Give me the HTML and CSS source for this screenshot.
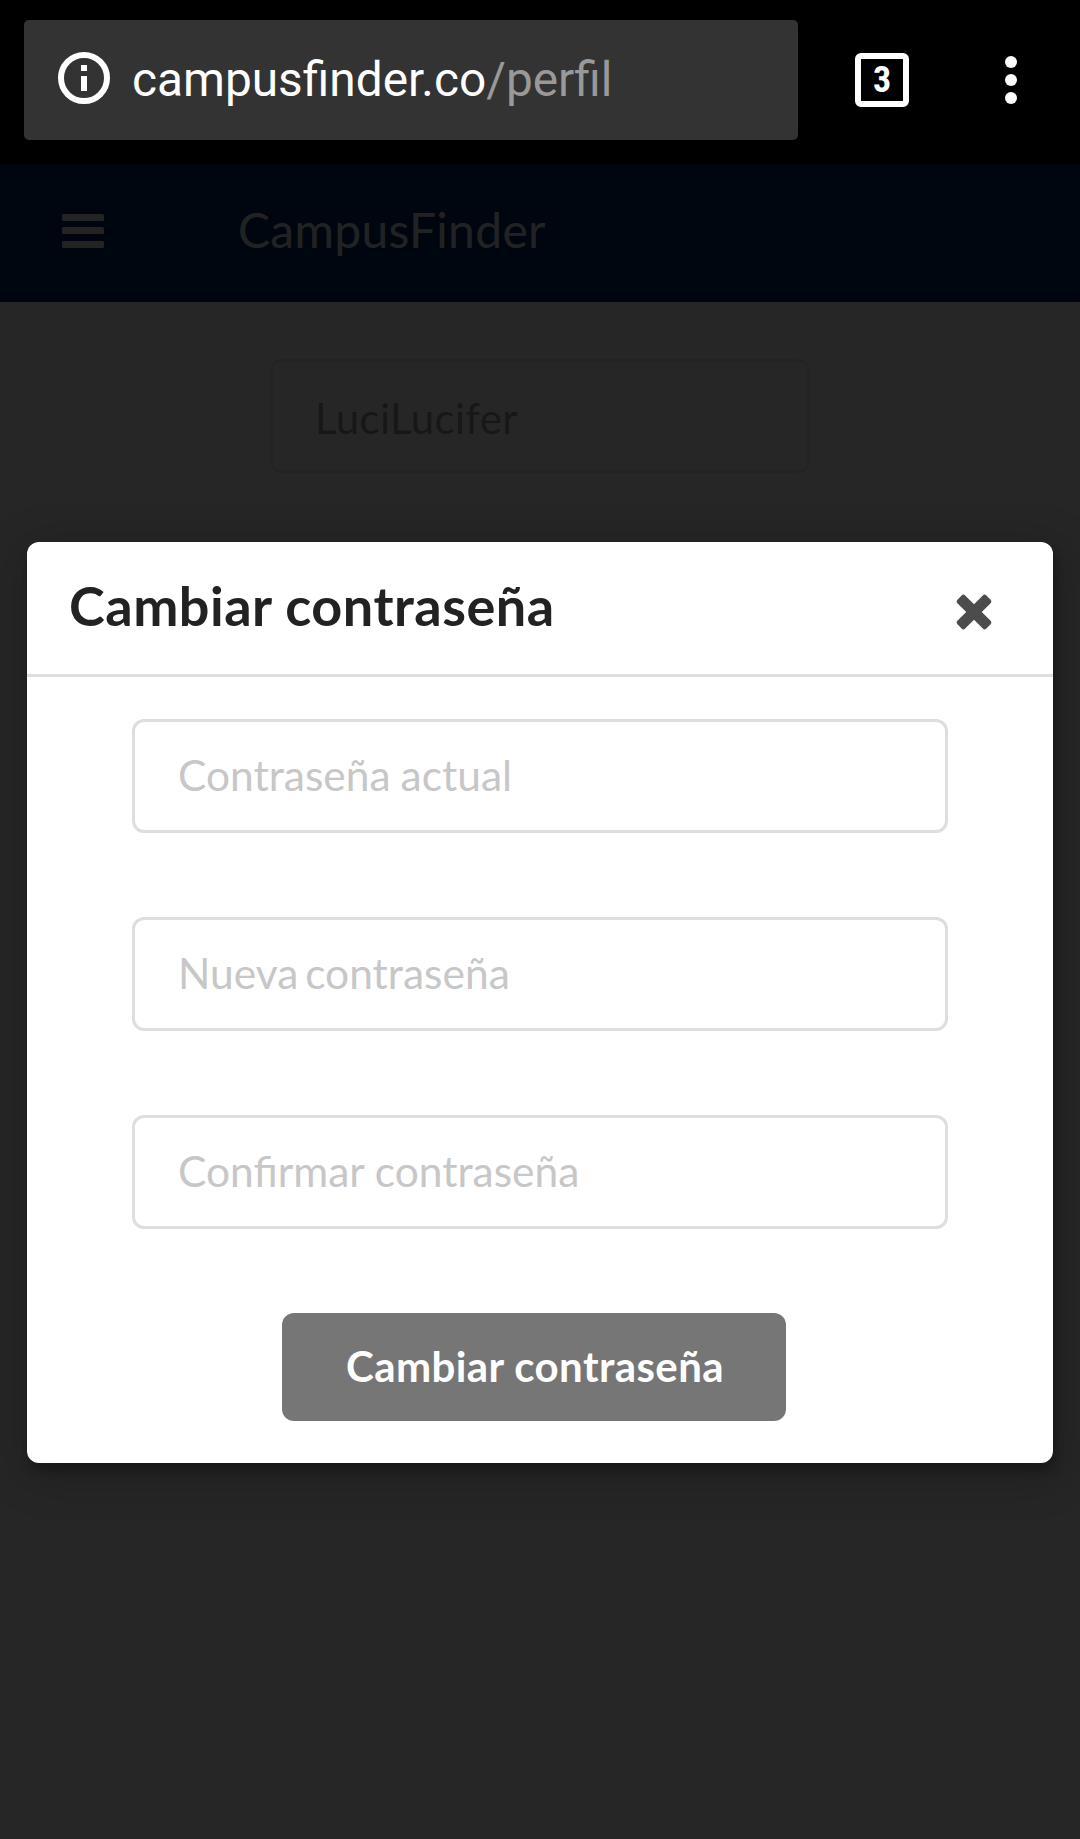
FILE: index.html
```html
<!DOCTYPE html>
<html lang="es">
<head>
<meta charset="utf-8">
<title>CampusFinder</title>
<link rel="stylesheet" href="styles.css">
</head>
<body>
<div class="browser-bar">
  <div class="address">
    <svg class="info-icon" viewBox="0 0 52 52" aria-hidden="true">
      <circle cx="26" cy="26" r="23" fill="none" stroke="#fff" stroke-width="6"/>
      <path fill="#fff" d="M23 13h6v6h-6zM23 24h6v15h-6z"/>
    </svg>
    <div class="url">campusfinder.co<span class="url-path">/perfil</span></div>
  </div>
  <div class="tab-count">3</div>
  <svg class="more-icon" viewBox="0 0 12 48" aria-hidden="true">
    <g fill="#fff"><circle cx="6" cy="6" r="6"/><circle cx="6" cy="24" r="6"/><circle cx="6" cy="42" r="6"/></g>
  </svg>
</div>
<div class="viewport">
  <div class="page">
    <header class="navbar">
      <svg class="menu-icon" viewBox="0 0 42 34" aria-hidden="true">
        <g fill="currentColor"><rect width="42" height="7" rx="1.5"/><rect y="13" width="42" height="7" rx="1.5"/><rect y="27" width="42" height="7" rx="1.5"/></g>
      </svg>
      <div class="brand">CampusFinder</div>
    </header>
    <div class="field username">LuciLucifer</div>
  </div>
  <div class="dimmer">
    <section class="modal">
      <div class="modal-header">
        <h1 class="modal-title">Cambiar contraseña</h1>
        <svg class="close-icon" viewBox="0 0 36 36" aria-hidden="true">
          <g fill="#4c4c4c" transform="rotate(45 18 18)"><rect x="-2.5" y="12.5" width="41" height="11" rx="2.5"/><rect x="12.5" y="-2.5" width="11" height="41" rx="2.5"/></g>
        </svg>
      </div>
      <form class="modal-form">
        <div class="field">Contraseña actual</div>
        <div class="field field-new">Nueva contraseña</div>
        <div class="field field-confirm">Confirmar contraseña</div>
        <button class="submit" type="button">Cambiar contraseña</button>
      </form>
    </section>
  </div>
</div>
</body>
</html>
```

FILE: styles.css
```css
* { box-sizing: border-box; }

body {
  margin: 0;
  height: 1839px;
  display: flex;
  flex-direction: column;
  overflow: hidden;
  font-family: Lato, sans-serif;
}

svg { display: block; overflow: visible; flex: none; }

.browser-bar {
  height: 164px;
  flex: none;
  display: flex;
  align-items: center;
  padding: 0 63px 4px 24px;
  background: #000;
  color: #fff;
  font-family: Roboto, sans-serif;
}

.address {
  width: 774px;
  height: 120px;
  display: flex;
  align-items: center;
  padding-left: 34px;
  border-radius: 5px;
  background: #333;
}

.info-icon { width: 52px; height: 52px; margin-top: -4px; }

.url {
  margin-left: 22px;
  font-size: 47.8px;
  line-height: 56px;
  white-space: nowrap;
}

.url-path { color: #999; }

.tab-count {
  width: 54px;
  height: 54px;
  margin-left: 57px;
  border: 6px solid #fff;
  border-radius: 6px;
  font: bold 36px/42px "Roboto Condensed", Roboto, sans-serif;
  text-align: center;
}

.more-icon { width: 12px; height: 48px; margin-left: auto; }

.viewport { flex: 1; display: grid; }

.page, .dimmer { grid-area: 1 / 1; }

.page { background: #fff; }

.navbar {
  height: 138px;
  display: flex;
  align-items: center;
  padding: 0 62px 4px;
  background: #002864;
  color: rgba(255, 255, 255, .9);
}

.menu-icon { width: 42px; height: 34px; }

.brand {
  margin-left: 134px;
  padding-bottom: 2px;
  font-size: 48px;
  line-height: 58px;
  letter-spacing: .3px;
}

.field {
  height: 114px;
  display: flex;
  align-items: center;
  padding: 0 43px 4px;
  border: 3px solid #dedede;
  border-radius: 12px;
  color: #c7c7c7;
  font-size: 42.5px;
  line-height: 51px;
  word-spacing: -1px;
}

.field-new { word-spacing: -4px; }

.field-confirm { word-spacing: 0; }

.username {
  width: 540px;
  margin: 57px auto 0;
  padding: 5px 42px 0;
  color: rgba(0, 0, 0, .87);
  border-color: rgba(34, 36, 38, .22);
  font-size: 42px;
  letter-spacing: .35px;
  opacity: .45;
}

.dimmer {
  z-index: 1;
  padding: 378px 27px 0;
  background: rgba(0, 0, 0, .85);
}

.modal {
  height: 921px;
  border-radius: 12px;
  background: #fff;
  box-shadow: 3px 9px 9px 0 rgba(0, 0, 0, .2), 3px 9px 45px 6px rgba(0, 0, 0, .2);
}

.modal-header {
  height: 135px;
  display: flex;
  align-items: center;
  justify-content: space-between;
  padding: 0 61px 0 42px;
  border-bottom: 3px solid #dedede;
}

.modal-title {
  margin: 0;
  padding-bottom: 4px;
  color: #222;
  font-size: 54px;
  font-weight: bold;
  line-height: 70px;
  letter-spacing: .5px;
}

.close-icon { width: 36px; height: 36px; margin-top: 8px; }

.modal-form {
  display: flex;
  flex-direction: column;
  gap: 84px;
  padding: 42px 105px;
}

.submit {
  width: 504px;
  height: 108px;
  margin-left: 150px;
  padding: 0 0 2px 2px;
  border: 0;
  border-radius: 12px;
  background: #767676;
  color: #fff;
  font: bold 42px/42px Lato, sans-serif;
  letter-spacing: .4px;
}
```
